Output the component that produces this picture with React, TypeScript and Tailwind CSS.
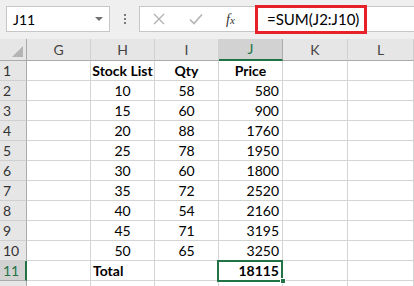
import React from "react";

const COLS = ["G", "H", "I", "J", "K", "L"];

interface Row {
  n: number;
  stock: string;
  qty: string;
  price: string;
  bold?: boolean;
}

const ROWS: Row[] = [
  { n: 1, stock: "Stock List", qty: "Qty", price: "Price", bold: true },
  { n: 2, stock: "10", qty: "58", price: "580" },
  { n: 3, stock: "15", qty: "60", price: "900" },
  { n: 4, stock: "20", qty: "88", price: "1760" },
  { n: 5, stock: "25", qty: "78", price: "1950" },
  { n: 6, stock: "30", qty: "60", price: "1800" },
  { n: 7, stock: "35", qty: "72", price: "2520" },
  { n: 8, stock: "40", qty: "54", price: "2160" },
  { n: 9, stock: "45", qty: "71", price: "3195" },
  { n: 10, stock: "50", qty: "65", price: "3250" },
];

const grid = "grid grid-cols-[27px_64px_64px_64px_64px_65px_1fr]";
const cell = "h-5 border-r border-b border-[#d4d4d4] text-[14px] leading-[19px] text-black";

function FormulaBar() {
  return (
    <div className="h-[39px] bg-[#efefef] flex items-start pt-[6px] pl-[6px]">
      <div className="w-[104px] h-[26px] bg-white border border-[#c6c6c6] flex items-center justify-between pl-[6px] pr-[6px]">
        <span className="text-[14px] text-black">J11</span>
        <span className="w-0 h-0 border-l-[4px] border-r-[4px] border-t-[4px] border-l-transparent border-r-transparent border-t-[#707070]" />
      </div>
      <div className="w-[29px] h-[26px] flex flex-col items-center justify-center gap-[2px]">
        <span className="w-[2px] h-[2px] bg-[#7a7a7a]" />
        <span className="w-[2px] h-[2px] bg-[#7a7a7a]" />
        <span className="w-[2px] h-[2px] bg-[#7a7a7a]" />
      </div>
      <div className="w-[116px] h-[26px] bg-white border border-[#c6c6c6] border-r-0 flex items-center">
        <svg width="12" height="12" viewBox="0 0 12 12" className="ml-[13px]">
          <path d="M1 1 L11 11 M11 1 L1 11" stroke="#b3b3b3" strokeWidth="1.4" fill="none" />
        </svg>
        <svg width="14" height="12" viewBox="0 0 14 12" className="ml-[24px]">
          <path d="M1 6.5 L5 10.5 L13 1.5" stroke="#b3b3b3" strokeWidth="1.6" fill="none" />
        </svg>
        <span className="ml-[23px] text-[14px] italic text-[#333] font-['Liberation_Serif',serif]">
          f<span className="text-[11px]">x</span>
        </span>
      </div>
      <div className="flex-1 h-[26px] bg-white border-t border-b border-[#c6c6c6] relative">
        <div className="absolute left-0 top-[-2px] w-[112px] h-[29px] border-[3px] border-[#e8202a] flex items-center pl-[9px]">
          <span className="text-[15px] text-black">=SUM(J2:J10)</span>
        </div>
      </div>
    </div>
  );
}

export default function App() {
  return (
    <div className="w-[414px] h-[286px] overflow-hidden bg-white font-['Lato','Liberation_Sans',sans-serif]">
      <FormulaBar />
      <div className={grid}>
        <div className="h-[22px] bg-[#e6e6e6] border-r border-b border-[#ababab] relative">
          <svg width="11" height="11" viewBox="0 0 11 11" className="absolute right-[3px] bottom-[3px]">
            <path d="M11 0 L11 11 L0 11 Z" fill="#b4b4b4" />
          </svg>
        </div>
        {COLS.map((c) =>
          c === "J" ? (
            <div key={c} className="h-[22px] bg-[#d2d2d2] border-r border-[#ababab] border-b-2 border-b-[#217346] text-center text-[14px] leading-[20px] text-[#217346]">
              {c}
            </div>
          ) : (
            <div key={c} className="h-[22px] bg-[#e6e6e6] border-r border-r-[#d0d0d0] border-b border-b-[#ababab] text-center text-[14px] leading-[21px] text-[#444]">
              {c}
            </div>
          )
        )}

        {ROWS.map((r) => (
          <React.Fragment key={r.n}>
            <div className="h-5 bg-[#e6e6e6] border-r border-b border-[#ababab] border-b-[#d0d0d0] pl-[3px] text-[14px] leading-[19px] text-[#333]">
              {r.n}
            </div>
            <div className={cell} />
            <div className={`${cell} text-center ${r.bold ? "font-bold" : ""}`}>{r.stock}</div>
            <div className={`${cell} text-center ${r.bold ? "font-bold" : ""}`}>{r.qty}</div>
            <div className={`${cell} ${r.bold ? "font-bold text-center" : "text-right pr-[3px]"}`}>{r.price}</div>
            <div className={cell} />
            <div className={cell} />
          </React.Fragment>
        ))}

        <div className="h-5 bg-[#d2d2d2] border-r-2 border-r-[#217346] border-b border-b-[#ababab] pl-[3px] text-[14px] leading-[19px] text-[#217346]">
          11
        </div>
        <div className={cell} />
        <div className={`${cell} font-bold pl-[2px]`}>Total</div>
        <div className={cell} />
        <div className={`${cell} relative`}>
          <div className="absolute left-[-2px] top-[-1px] w-[66px] h-[22px] border-2 border-[#217346] text-right pr-[2px] font-bold leading-[17px]">
            18115
          </div>
          <span className="absolute right-[-4px] bottom-[-4px] w-[6px] h-[6px] bg-[#217346] border border-white" />
        </div>
        <div className={cell} />
        <div className={cell} />

        <div className="h-5 bg-[#e6e6e6] border-r border-[#ababab]" />
        <div className={cell} />
        <div className={cell} />
        <div className={cell} />
        <div className={cell} />
        <div className={cell} />
        <div className={cell} />
      </div>
    </div>
  );
}
